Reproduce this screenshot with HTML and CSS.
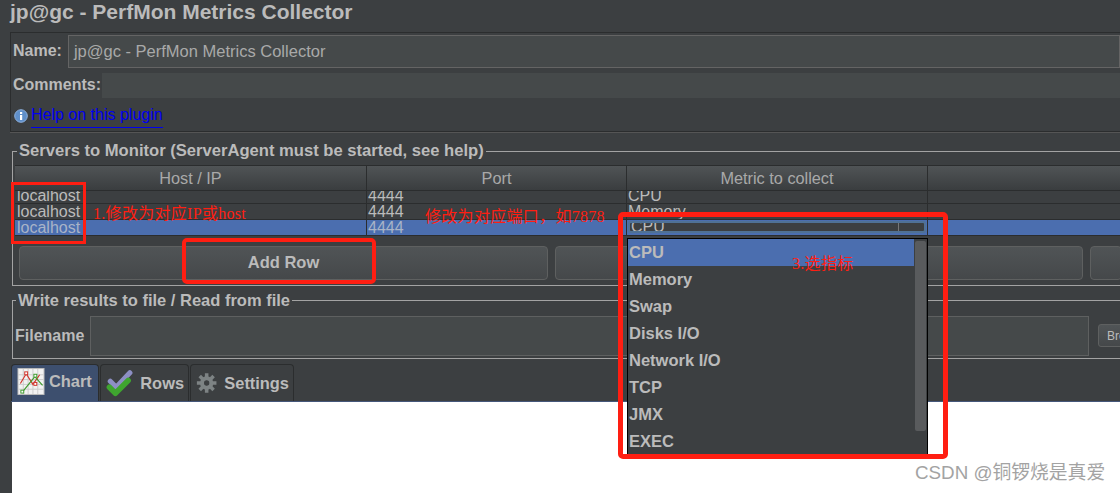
FILE: index.html
```html
<!DOCTYPE html>
<html lang="en">
<head>
  <meta charset="UTF-8" />
  <title>PerfMon Metrics Collector</title>
  <link rel="stylesheet" href="styles.css">
</head>
<body>
  <h1 class="page-title">jp@gc - PerfMon Metrics Collector</h1>

  <div class="info-panel">
    <div class="name-row">
      <label class="field-label">Name:</label>
      <div class="name-input">jp@gc - PerfMon Metrics Collector</div>
    </div>
    <div class="comments-row">
      <label class="field-label">Comments:</label>
      <div class="comments-input"></div>
    </div>
    <div class="help-row">
      <svg class="info-icon" width="14" height="14" viewBox="0 0 14 14">
        <circle cx="7" cy="7" r="6.3" fill="#5f8fc9" stroke="#8db0dc"/>
        <rect x="6" y="6" width="2.2" height="5" fill="#fff"/>
        <rect x="6" y="3" width="2.2" height="2" fill="#fff"/>
      </svg>
      <a class="help-link">Help on this plugin</a>
    </div>
  </div>

  <fieldset class="group servers">
    <legend>Servers to Monitor (ServerAgent must be started, see help)</legend>
    <div class="table">
      <div class="table-head">
        <div class="col col-host">Host / IP</div>
        <div class="col col-port">Port</div>
        <div class="col col-metric">Metric to collect</div>
        <div class="col col-rest"></div>
      </div>
      <div class="table-row row-first">
        <div class="col col-host">localhost</div>
        <div class="col col-port">4444</div>
        <div class="col col-metric">CPU</div>
        <div class="col col-rest"></div>
      </div>
      <div class="table-row row-second">
        <div class="col col-host">localhost</div>
        <div class="col col-port">4444</div>
        <div class="col col-metric">Memory</div>
        <div class="col col-rest"></div>
      </div>
      <div class="table-row row-selected">
        <div class="col col-host">localhost</div>
        <div class="col col-port">4444</div>
        <div class="col col-metric metric-cell">
          <div class="metric-editor"><span>CPU</span><i class="editor-arrow"></i></div>
        </div>
        <div class="col col-rest"></div>
      </div>
    </div>
    <div class="button-row">
      <button class="btn btn-add">Add Row</button>
      <button class="btn btn-wide"></button>
      <button class="btn btn-last"></button>
    </div>
  </fieldset>

  <fieldset class="group results">
    <legend>Write results to file / Read from file</legend>
    <div class="file-row">
      <label class="field-label">Filename</label>
      <div class="file-input"></div>
      <button class="browse-btn">Browse...</button>
    </div>
  </fieldset>

  <div class="tabs">
    <div class="tab tab-active">
      <svg width="28" height="27" viewBox="0 0 28 28">
        <rect x="0.5" y="0.5" width="27" height="27" fill="#f2f2f2" stroke="#bbb"/>
        <path d="M6 1v26M11 1v26M16 1v26M21 1v26M1 7h26M1 12h26M1 17h26M1 22h26" stroke="#ccc" fill="none"/>
        <path d="M3 16L9 6L16 17L23 7" stroke="#d0342c" stroke-width="1.2" fill="none"/>
        <path d="M5 25L18 9L26 18" stroke="#3d9a2c" stroke-width="1.2" fill="none"/>
        <rect x="7.5" y="4" width="3" height="3" fill="#fff" stroke="#d0342c"/>
        <rect x="17" y="6.5" width="3" height="3" fill="#fff" stroke="#3d9a2c"/>
        <rect x="17" y="15" width="3" height="3" fill="#fff" stroke="#d0342c"/>
        <rect x="3.5" y="23" width="3" height="3" fill="#fff" stroke="#3d9a2c"/>
      </svg>
      <span>Chart</span>
    </div>
    <div class="tab">
      <svg width="30" height="32" viewBox="0 0 32 32">
        <path d="M5 14L12 21L28 4" stroke="#8d8fc4" stroke-width="6" stroke-linecap="round" stroke-linejoin="round" fill="none"/>
        <path d="M4 21L11 28L26 13" stroke="#3fa52f" stroke-width="6.5" stroke-linecap="round" stroke-linejoin="round" fill="none"/>
      </svg>
      <span>Rows</span>
    </div>
    <div class="tab">
      <svg width="24" height="24" viewBox="0 0 24 24">
        <path d="M12 7a5 5 0 1 0 0 10a5 5 0 1 0 0-10z" fill="none" stroke="#7d8384" stroke-width="5"/>
        <path d="M12 1v5M12 18v5M1 12h5M18 12h5M4.2 4.2l3.5 3.5M16.3 16.3l3.5 3.5M19.8 4.2l-3.5 3.5M7.7 16.3l-3.5 3.5" stroke="#7d8384" stroke-width="4"/>
        <circle cx="12" cy="12" r="3" fill="#3c3f41"/>
      </svg>
      <span>Settings</span>
    </div>
  </div>
  <div class="chart-area"></div>

  <!-- dropdown list opened from the metric cell -->
  <div class="metric-popup">
    <ul class="metric-list">
      <li class="metric-current">CPU</li>
      <li>Memory</li>
      <li>Swap</li>
      <li>Disks I/O</li>
      <li>Network I/O</li>
      <li>TCP</li>
      <li>JMX</li>
      <li>EXEC</li>
    </ul>
    <div class="popup-scroll"></div>
  </div>

  <!-- red notes drawn over the screenshot -->
  <div class="mark mark-host"></div>
  <div class="mark mark-add"></div>
  <div class="mark mark-metric"></div>
  <span class="note note-host">1.修改为对应IP或host</span>
  <span class="note note-port">修改为对应端口，如7878</span>
  <span class="note note-metric">3.选指标</span>
  <span class="watermark">CSDN @铜锣烧是真爱</span>
</body>
</html>
```

FILE: styles.css
```css
html, body {
  height: 493px;
  overflow: hidden;
}
body {
  position: relative;
  margin: 0;
  background: #3c3f41;
  color: #bbbbbb;
  font-family: "Liberation Sans", "Noto Sans CJK SC", sans-serif;
  font-size: 16px;
}
.page-title {
  margin: 0 0 0 10px;
  height: 32px;
  line-height: 24px;
  font-size: 21px;
  font-weight: bold;
}
.field-label {
  font-weight: bold;
  white-space: nowrap;
}

/* Name / comments block */
.info-panel {
  box-sizing: border-box;
  height: 100px;
  margin-left: 10px;
  padding: 1px 0 0 2px;
  border: 1px solid #2b2d2e;
  border-right: none;
  box-shadow: 0 1px 0 #555;
}
.name-row {
  display: flex;
  align-items: center;
  gap: 6px;
  height: 34px;
}
.name-input {
  flex: 1;
  box-sizing: border-box;
  height: 33px;
  line-height: 31px;
  padding-left: 5px;
  background: #45494a;
  border: 1px solid #646464;
  color: #a9a9a9;
  font-size: 16.5px;
}
.comments-row {
  display: flex;
  align-items: center;
  margin-top: 4px;
  height: 26px;
}
.comments-input {
  flex: 1;
  height: 25px;
  margin-left: 1px;
  background: #45494a;
}
.help-row {
  display: flex;
  align-items: flex-start;
  gap: 3px;
  margin-top: 4px;
  padding-left: 1px;
}
.info-icon {
  margin-top: 7px;
}
.help-link {
  color: #0000ee;
  line-height: 20px;
  padding: 3px 0 2px;
  border-bottom: 1px solid #0000ee;
}

/* Titled groups */
.group {
  margin: 0 0 0 12px;
  padding: 0;
  min-width: 0;
  border: 1px solid #a3a3a3;
  border-right: none;
}
.group legend {
  padding: 0 2px 0 2px;
  margin-left: 4px;
  font-size: 16.6px;
  font-weight: bold;
  line-height: 18px;
}
.servers {
  height: 144px;
  box-sizing: border-box;
  margin-top: 10px;
}
.table {
  margin: 5px 0 0 2px;
  border-top: 1px solid #2b2d2e;
}
.table-head, .table-row {
  display: flex;
  overflow: hidden;
}
.table-head {
  height: 24px;
  background: linear-gradient(#505456, #3a3d3f);
  color: #a9a9a9;
  font-size: 16.3px;
  text-align: center;
  line-height: 24px;
}
.table-row {
  border-top: 1px solid #2b2d2e;
  line-height: 16px;
  color: #bbbbbb;
}
.row-first {
  height: 12px;
  line-height: 10px;
}
.row-second {
  height: 15px;
}
.row-selected {
  height: 15px;
  background: #4b6eaf;
  border-bottom: 1px solid #2b2d2e;
}
.row-selected .col {
  color: #a9b4c8;
}
.col {
  box-sizing: border-box;
  border-right: 1px solid #2b2d2e;
  padding-left: 1px;
  white-space: nowrap;
  overflow: hidden;
}
.col-host {
  padding-left: 2px;
}
.table-head .col {
  padding-left: 0;
}
.col-host { width: 352px; }
.col-port { width: 260px; }
.col-metric { width: 301px; }
.col-rest { flex: 1; border-right: none; }
.row-selected .metric-cell {
  padding-left: 1px;
}
.metric-editor {
  display: flex;
  box-sizing: border-box;
  width: 298px;
  height: 12px;
  margin-top: 1px;
  background: #3c3f41;
  border: 2px solid #4f7195;
  border-radius: 3px;
  line-height: 14px;
  color: #bbb;
  overflow: hidden;
}
.metric-editor span {
  flex: 1;
  margin-top: -3px;
  padding-left: 1px;
}
.editor-arrow {
  width: 25px;
  border-left: 1px solid #777;
}
.button-row {
  display: flex;
  gap: 7px;
  margin: 10px 0 0 6px;
}
.btn {
  height: 34px;
  padding: 0 0 2px;
  background: linear-gradient(#505456, #45484a);
  border: 1px solid #5e6060;
  border-radius: 4px;
  color: #bbbbbb;
  font-family: inherit;
  font-size: 16.5px;
  font-weight: bold;
}
.btn-add { width: 529px; }
.btn-wide { width: 528px; }
.btn-last { flex: 1; margin-right: -2px; }

/* File row */
.results {
  box-sizing: border-box;
  height: 68px;
  margin-top: 5px;
}
.results legend {
  margin-left: 3px;
  font-size: 16.5px;
}
.file-row {
  display: flex;
  align-items: flex-start;
  margin: 7px 0 0 2px;
}
.file-row .field-label {
  flex: none;
  width: 75px;
  line-height: 40px;
}
.file-input {
  box-sizing: border-box;
  flex: none;
  width: 999px;
  height: 40px;
  background: #45494a;
  border: 1px solid #5e6060;
}
.browse-btn {
  flex: none;
  width: 60px;
  height: 23px;
  margin: 8px 0 0 9px;
  padding: 0 0 0 8px;
  background: linear-gradient(#505456, #45484a);
  border: 1px solid #5e6060;
  border-radius: 3px;
  color: #bbb;
  font-family: inherit;
  font-size: 12px;
  text-align: left;
}

/* Tabs */
.tabs {
  display: flex;
  gap: 1px;
  height: 37px;
  margin: 5px 0 0 11px;
  border-bottom: 1px solid #45577a;
}
.tab {
  display: flex;
  align-items: center;
  box-sizing: border-box;
  gap: 7px;
  height: 37px;
  padding: 0 4px 0 5px;
  background: #3c3f41;
  border: 1px solid #2b2d2e;
  border-bottom: none;
  border-radius: 4px 4px 0 0;
  font-size: 16.4px;
  font-weight: bold;
}
.tab-active {
  width: 88px;
  padding-bottom: 3px;
  background: #3d4f6e;
  gap: 4px;
}
.tab:nth-child(2) { width: 89px; }
.tab:nth-child(3) { width: 104px; }
.chart-area {
  height: 91px;
  margin-left: 12px;
  background: #fff;
}

/* Dropdown */
.metric-popup {
  position: absolute;
  left: 627px;
  top: 238px;
  box-sizing: border-box;
  width: 301px;
  height: 218px;
  background: #3c3f41;
  border: 1px solid #000;
}
.metric-list {
  margin: 0;
  padding: 0;
  list-style: none;
  font-size: 16.5px;
  font-weight: bold;
}
.metric-list li {
  width: 285px;
  height: 27px;
  padding-left: 1px;
  line-height: 27px;
}
.metric-list .metric-current {
  background: #4b6eaf;
}
.popup-scroll {
  position: absolute;
  left: 287px;
  top: 2px;
  width: 11px;
  height: 190px;
  background: #595b5d;
  border-radius: 2px;
}

/* Red marks */
.mark {
  position: absolute;
  box-sizing: border-box;
  border: 3px solid #ff1e12;
}
.mark-host {
  left: 11px;
  top: 182px;
  width: 75px;
  height: 62px;
}
.mark-add {
  left: 182px;
  top: 238px;
  width: 194px;
  height: 46px;
  border-width: 4px;
  border-radius: 5px;
}
.mark-metric {
  left: 618px;
  top: 212px;
  width: 330px;
  height: 247px;
  border-width: 5px;
  border-radius: 5px;
}
.note {
  position: absolute;
  color: #ff1e12;
  font-family: "Liberation Serif", "Noto Sans CJK SC", serif;
  font-size: 16px;
  letter-spacing: 0.3px;
  line-height: 18px;
  white-space: nowrap;
}
.note-host { left: 93px; top: 205px; }
.note-port { left: 425px; top: 208px; }
.note-metric { left: 792px; top: 255px; }
.watermark {
  position: absolute;
  left: 915px;
  top: 463px;
  color: #a3a3a3;
  font-size: 18.8px;
  line-height: 20px;
  white-space: nowrap;
}
```
